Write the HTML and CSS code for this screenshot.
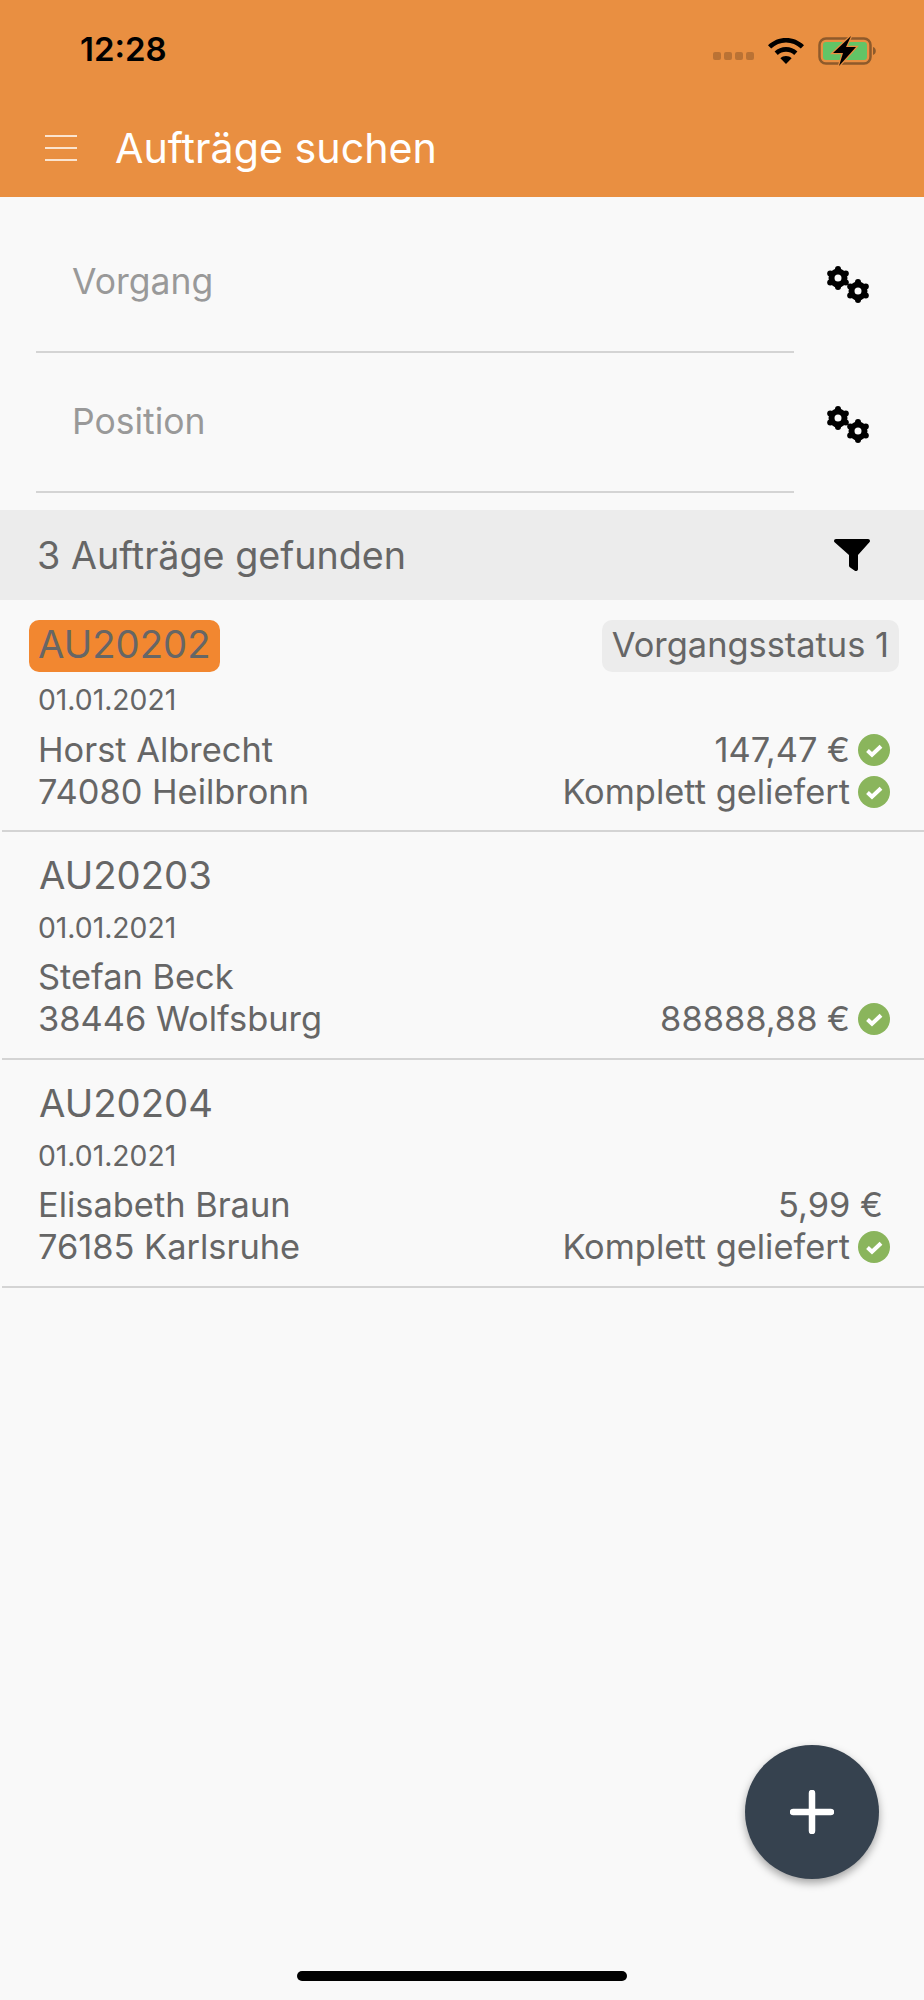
FILE: index.html
```html
<!DOCTYPE html>
<html lang="de">
<head>
<meta charset="UTF-8">
<meta name="viewport" content="width=device-width, initial-scale=1.0">
<title>Aufträge suchen</title>
<link rel="stylesheet" href="styles.css">
</head>
<body>

<svg class="defs" width="0" height="0">
	<symbol id="gears" viewBox="0 0 46 40">
		<g id="gear-a">
			<circle cx="13" cy="13" r="6.5" fill="none" stroke="#000" stroke-width="6"/>
			<circle cx="13" cy="4" r="3"/>
			<circle cx="13" cy="22" r="3"/>
			<circle cx="5.2" cy="8.5" r="3"/>
			<circle cx="20.8" cy="8.5" r="3"/>
			<circle cx="5.2" cy="17.5" r="3"/>
			<circle cx="20.8" cy="17.5" r="3"/>
		</g>
		<use href="#gear-a" x="20" y="13"/>
	</symbol>
	<symbol id="check" viewBox="0 0 32 32">
		<circle cx="16" cy="16" r="16" fill="#8ab55c"/>
		<path d="M9.500 16.500l4.500 4.200 9-8.400" fill="none" stroke="#fff" stroke-width="4"/>
	</symbol>
</svg>

<div class="phone">

	<!-- Kopfbereich -->
	<header class="top">
		<div class="status">
			<span class="time">12:28</span>
			<div class="status-icons">
				<div class="signal"><i></i><i></i><i></i><i></i></div>
				<svg class="wifi" viewBox="0 0 36 26" width="36" height="26">
					<path d="M18 0C11 0 5 2.600 0 7.200l3.200 3.400C7.400 6.800 12.400 4.600 18 4.600s10.600 2.200 14.800 6L36 7.200C31 2.600 25 0 18 0z"/>
					<path d="M18 9c-4.400 0-8.200 1.600-11.400 4.500l3.200 3.400c2.200-2 5-3.200 8.200-3.200s6 1.200 8.200 3.200l3.200-3.400C26.200 10.600 22.400 9 18 9z"/>
					<path d="M18 18c-2.200 0-4.200.8-5.600 2.200L18 26l5.600-5.800C22.200 18.800 20.200 18 18 18z"/>
				</svg>
				<svg class="battery" viewBox="0 0 58 30" width="58" height="30">
					<rect x="1.500" y="2.500" width="51" height="25" rx="6.500" fill="none" stroke="#8d5a2b" stroke-width="2.500"/>
					<rect x="5" y="6" width="44" height="18" rx="3" fill="#62c466"/>
					<path d="M55 11c1.800.6 2.800 2.200 2.800 4s-1 3.400-2.800 4z" fill="#8d5a2b"/>
					<path d="M33 0L15 17h10L21 30l17-19H28z" stroke="#e98f41" stroke-width="2.500" paint-order="stroke"/>
				</svg>
			</div>
		</div>
		<div class="nav">
			<div class="burger"><i></i><i></i><i></i></div>
			<h1>Aufträge suchen</h1>
		</div>
	</header>

	<!-- Suchfelder -->
	<section class="search">
		<div class="field">
			<div class="input">Vorgang</div>
			<svg class="gears"><use href="#gears"/></svg>
		</div>
		<div class="field">
			<div class="input">Position</div>
			<svg class="gears"><use href="#gears"/></svg>
		</div>
	</section>

	<div class="result-bar">
		<span>3 Aufträge gefunden</span>
		<svg class="filter" viewBox="0 0 36 32" width="36" height="32">
			<path d="M2 0h32c1.800 0 2.600 2 1.400 3.300L24 16v14c0 1.800-1.800 2.600-3.200 1.700l-5-3.400c-.6-.4-.8-1-.8-1.700V16L.6 3.300C-.6 2 .2 0 2 0z"/>
		</svg>
	</div>

	<!-- Auftragsliste -->
	<div class="orders">
		<div class="order first">
			<div class="order-head">
				<span class="order-id marked">AU20202</span>
				<span class="state">Vorgangsstatus 1</span>
			</div>
			<div class="date">01.01.2021</div>
			<div class="line">
				<span>Horst Albrecht</span>
				<span class="val">147,47 €<svg class="check"><use href="#check"/></svg></span>
			</div>
			<div class="line">
				<span>74080 Heilbronn</span>
				<span class="val">Komplett geliefert<svg class="check"><use href="#check"/></svg></span>
			</div>
		</div>
		<div class="order">
			<div class="order-head">
				<span class="order-id">AU20203</span>
			</div>
			<div class="date">01.01.2021</div>
			<div class="line">
				<span>Stefan Beck</span>
			</div>
			<div class="line">
				<span>38446 Wolfsburg</span>
				<span class="val">88888,88 €<svg class="check"><use href="#check"/></svg></span>
			</div>
		</div>
		<div class="order">
			<div class="order-head">
				<span class="order-id">AU20204</span>
			</div>
			<div class="date">01.01.2021</div>
			<div class="line">
				<span>Elisabeth Braun</span>
				<span class="val no-check">5,99 €</span>
			</div>
			<div class="line">
				<span>76185 Karlsruhe</span>
				<span class="val">Komplett geliefert<svg class="check"><use href="#check"/></svg></span>
			</div>
		</div>
	</div>

	<button class="fab">
		<svg viewBox="0 0 44 44" width="44" height="44"><path d="M22 3v38M3 22h38" stroke="#fff" stroke-width="6.500" stroke-linecap="round"/></svg>
	</button>
	<div class="home-bar"></div>
</div>

</body>
</html>
```

FILE: styles.css
```css
* {
	box-sizing: border-box;
}
html, body {
	margin: 0;
	padding: 0;
}
body {
	font-family: Inter, "Noto Sans", sans-serif;
	background-color: #f9f9f9;
	color: #666;
}
.defs {
	display: block;
	height: 0;
}
.phone {
	position: relative;
	width: 924px;
	height: 2000px;
	overflow: hidden;
}

/* header */
.top {
	height: 197px;
	background-color: #e98f41;
}
.status {
	height: 100px;
	display: flex;
	justify-content: space-between;
	align-items: flex-start;
	padding: 26px 48px 0 80px;
}
.time {
	font-size: 33px;
	font-weight: 600;
	line-height: 46px;
	color: #000;
}
.status-icons {
	display: flex;
	align-items: center;
	gap: 14px;
	padding-top: 10px;
}
.signal {
	display: flex;
	gap: 3px;
	margin-top: 9px;
}
.signal i {
	width: 8px;
	height: 8px;
	border-radius: 2px;
	background-color: rgba(0, 0, 0, 0.2);
}
.nav {
	display: flex;
	align-items: center;
	padding-left: 45px;
	height: 97px;
}
.nav h1 {
	margin: -2px 0 0 38px;
	font-size: 41.200px;
	font-weight: 400;
	color: #fff;
}
.burger {
	width: 32px;
	display: flex;
	flex-direction: column;
	gap: 10px;
	margin-top: -2px;
}
.burger i {
	height: 2px;
	background-color: #fbe4cf;
}

/* search */
.search {
	height: 313px;
	padding: 15px 0 0 36px;
}
.field {
	display: flex;
	align-items: center;
	height: 141px;
	margin-bottom: -1px;
}
.input {
	width: 758px;
	height: 141px;
	padding: 50px 0 0 36px;
	font-size: 35.500px;
	line-height: 40px;
	color: #999;
	border-bottom: 2px solid #d4d4d4;
}
.gears {
	width: 46px;
	height: 40px;
	margin: 4px 0 0 31px;
}
.result-bar {
	height: 90px;
	background-color: #ececec;
	display: flex;
	justify-content: space-between;
	align-items: center;
	padding: 0 54px 0 37px;
	font-size: 37.700px;
}

/* orders */
.order {
	height: 228px;
	margin-left: 2px;
	padding: 17px 25px 0 27px;
	border-bottom: 2px solid #d4d4d4;
}
.order.first {
	height: 232px;
	padding-top: 20px;
}
.order-head {
	display: flex;
	justify-content: space-between;
	height: 52px;
	font-size: 38.300px;
	line-height: 52px;
}
.order-id {
	padding: 0 9px 0 10px;
	border-radius: 10px;
}
.order-id.marked {
	padding: 0 9px;
	line-height: 49px;
	background-color: #f28730;
}
.state {
	font-size: 34.400px;
	line-height: 50px;
	padding: 0 10px;
	border-radius: 10px;
	background-color: #ececec;
}
.date {
	margin: 7px 0 8px 9px;
	font-size: 28.300px;
	line-height: 40px;
}
.first .date {
	margin: 8px 0 9px 9px;
}
.line {
	display: flex;
	justify-content: space-between;
	padding: 0 9px 0 9px;
	font-size: 34.400px;
	line-height: 42px;
}
.val {
	display: flex;
	align-items: center;
}
.no-check {
	padding-right: 7px;
}
.check {
	width: 32px;
	height: 32px;
	margin-left: 8px;
}

/* floating */
.fab {
	position: absolute;
	left: 745px;
	top: 1745px;
	width: 134px;
	height: 134px;
	padding: 0;
	border: none;
	border-radius: 50%;
	background-color: #36424f;
	box-shadow: 0 4px 8px rgba(0, 0, 0, 0.35);
	display: flex;
	align-items: center;
	justify-content: center;
}
.home-bar {
	position: absolute;
	left: 297px;
	top: 1971px;
	width: 330px;
	height: 10px;
	border-radius: 5px;
	background-color: #000;
}
```
